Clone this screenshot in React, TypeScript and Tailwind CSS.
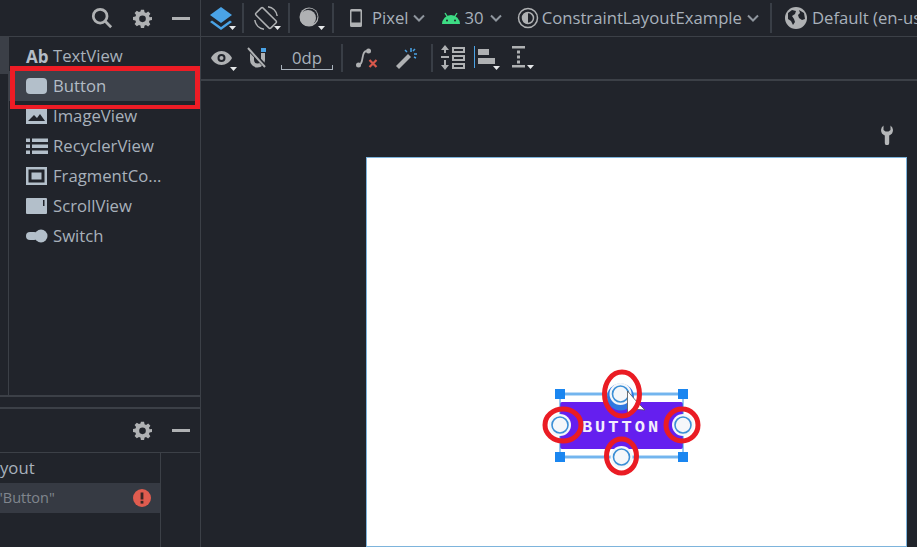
const font = "font-['Open_Sans','Noto_Sans',sans-serif]";

function Caret({ className = "" }: { className?: string }) {
  return (
    <svg width="7" height="4" viewBox="0 0 7 4" className={className}>
      <path d="M0 0h7L3.5 4z" fill="#e6e8ea" />
    </svg>
  );
}

function Chevron() {
  return (
    <svg width="12" height="8" viewBox="0 0 12 8" fill="none" stroke="#8f969e" strokeWidth="2" className="shrink-0">
      <path d="M1 1.5l5 5 5-5" />
    </svg>
  );
}

function Gear() {
  return (
    <svg width="19" height="19" viewBox="0 0 24 24" fill="#afb1b3">
      <path
        fillRule="evenodd"
        d="M10 1h4l.6 3.1 1.9.8 2.7-1.8 2.8 2.8-1.8 2.7.8 1.9L24 10v4l-3.1.6-.8 1.9 1.8 2.7-2.8 2.8-2.7-1.8-1.9.8L14 24h-4l-.6-3.1-1.9-.8-2.7 1.800L2 19.100l1.800-2.700-.8-1.900L0 14v-4l3.100-.6.8-1.900L2 4.900l2.800-2.800 2.700 1.800 1.900-.8zM12 8.200a4.200 4.200 0 100 8.400 4.200 4.200 0 000-8.400z"
      />
    </svg>
  );
}

function Minus() {
  return <div className="h-[3px] w-[18px] bg-[#afb1b3]" />;
}

function Sep({ h = "h-[30px]" }: { h?: string }) {
  return <div className={`w-[2px] shrink-0 ${h} bg-[#393e46]`} />;
}

const paletteIcons: Record<string, React.ReactNode> = {
  TextView: (
    <span className="text-[17px] font-bold leading-none text-[#b3bcc6]">Ab</span>
  ),
  Button: (
    <svg width="22" height="16" viewBox="0 0 22 16">
      <rect width="21" height="16" rx="4" fill="#b3bfca" />
    </svg>
  ),
  ImageView: (
    <svg width="22" height="16" viewBox="0 0 22 16">
      <path fillRule="evenodd" d="M0 0h21v16H0zM2 13h17l-5-7-3 4-3-3z" fill="#b3bfca" />
    </svg>
  ),
  RecyclerView: (
    <svg width="22" height="16" viewBox="0 0 22 16" fill="#b3bfca">
      <rect y="0.5" width="4" height="3.5" />
      <rect x="6" y="0.5" width="16" height="3.5" />
      <rect y="6.5" width="4" height="3.5" />
      <rect x="6" y="6.5" width="16" height="3.5" />
      <rect y="12.5" width="4" height="3.5" />
      <rect x="6" y="12.5" width="16" height="3.5" />
    </svg>
  ),
  "FragmentCo...": (
    <svg width="22" height="18" viewBox="0 0 22 18">
      <path fillRule="evenodd" d="M0 0h21v18H0zM2.500 2.500v13h16v-13zM5.500 5.500h10v7h-10z" fill="#b3bfca" />
    </svg>
  ),
  ScrollView: (
    <svg width="22" height="16" viewBox="0 0 22 16">
      <path fillRule="evenodd" d="M1 0h19a1 1 0 011 1v14a1 1 0 01-1 1H1a1 1 0 01-1-1V1a1 1 0 011-1zM17 2v6h1.500V2z" fill="#b3bfca" />
    </svg>
  ),
  Switch: (
    <svg width="22" height="14" viewBox="0 0 22 14" fill="#b3bfca">
      <rect y="3" width="12" height="8" rx="4" />
      <circle cx="15" cy="7" r="6.500" />
    </svg>
  ),
};

const paletteItems = ["TextView", "Button", "ImageView", "RecyclerView", "FragmentCo...", "ScrollView", "Switch"];

function Palette() {
  return (
    <div className="relative flex-1 flex min-h-0">
      <div className="w-[9px] flex flex-col border-r border-[#3c4047]">
        <div className="h-[37px] bg-[#3b3f47]" />
      </div>
      <div className="flex-1 pt-[4px]">
        {paletteItems.map((name) => (
          <div
            key={name}
            className={`flex items-center h-[30px] pl-[17px] ${
              name === "Button" ? "bg-[#3d424b] text-[#b3bcc6]" : "text-[#a8b1bb]"
            }`}
          >
            <span className="w-[27px] flex items-center">{paletteIcons[name]}</span>
            <span className="text-[16.7px] leading-none pt-[1px]">{name}</span>
          </div>
        ))}
      </div>
      {/* red annotation around the Button row */}
      <div className="absolute left-[10px] top-[29px] w-[190px] h-[43px] border-[5px] border-b-[4px] border-[#ee1c25]" />
    </div>
  );
}

function BottomPanel() {
  return (
    <div className="h-[140px] flex flex-col shrink-0 border-t-[2px] border-[#3c4047]">
      <div className="h-[44px] flex items-center justify-end gap-[20px] pr-[10px] border-b border-[#3c4047]">
        <Gear />
        <Minus />
      </div>
      <div className="flex-1 flex">
        <div className="w-[161px] border-r border-[#3c4047]">
          <div className="h-[30px] flex items-center text-[16.7px] text-[#a8b1bb]">
            <span className="leading-none">yout</span>
          </div>
          <div className="h-[30px] flex items-center justify-between bg-[#363a43] pr-[9px]">
            <span className="text-[14.5px] leading-none text-[#80868e] -ml-[3px]">"Button"</span>
            <svg width="18" height="18" viewBox="0 0 18 18">
              <circle cx="9" cy="9" r="9" fill="#e05c4f" />
              <rect x="7.600" y="3.500" width="2.800" height="7" fill="#3a2624" />
              <rect x="7.600" y="11.800" width="2.800" height="2.800" fill="#3a2624" />
            </svg>
          </div>
        </div>
      </div>
    </div>
  );
}

function TopBar() {
  return (
    <div className="h-[37px] flex items-center border-b border-[#3c4047] pl-[8px] text-[16.7px] text-[#a8b1bb] whitespace-nowrap overflow-hidden">
      {/* layers */}
      <div className="relative w-[24px] h-[24px] mr-[9px] shrink-0">
        <svg width="24" height="24" viewBox="0 0 24 24">
          <path d="M12 1l11 8-11 8L1 9z" fill="#4aa3e6" />
          <path d="M3 14.500l9 6.500 9-6.500 2 1.500-11 8-11-8z" fill="#4aa3e6" />
        </svg>
        <Caret className="absolute -right-[3px] bottom-0" />
      </div>
      <Sep />
      {/* orientation */}
      <div className="relative w-[24px] h-[24px] mx-[10px] shrink-0">
        <svg width="24" height="24" viewBox="0 0 24 24" fill="none" stroke="#afb1b3" strokeWidth="1.500">
          <rect x="7" y="1.500" width="10" height="21" rx="1.500" transform="rotate(-45 12 12)" />
          <path d="M14 .8A11 11 0 0123.200 10M10 23.200A11 11 0 01.8 14" />
        </svg>
        <Caret className="absolute -right-[3px] bottom-0" />
      </div>
      <Sep />
      {/* night mode */}
      <div className="relative w-[24px] h-[24px] mx-[9px] shrink-0">
        <svg width="20" height="20" viewBox="0 0 20 20" className="mt-[1px]">
          <circle cx="10" cy="10" r="9.500" fill="#afb1b3" />
          <circle cx="10.500" cy="9.500" r="8" fill="#21242b" />
          <circle cx="9" cy="11" r="8" fill="#afb1b3" />
        </svg>
        <Caret className="absolute -right-[2px] bottom-0" />
      </div>
      <Sep />
      <svg width="12" height="18" viewBox="0 0 12 18" className="ml-[16px] mr-[10px] shrink-0">
        <path fillRule="evenodd" d="M1.500 0h9A1.500 1.500 0 0112 1.500v15a1.500 1.500 0 01-1.500 1.500h-9A1.500 1.500 0 010 16.500v-15A1.500 1.500 0 011.500 0zM1.500 2.500v11h9v-11z" fill="#afb1b3" />
      </svg>
      <span className="mr-[4px]">Pixel</span>
      <Chevron />
      <svg width="20" height="12" viewBox="0 0 20 12" className="ml-[16px] mr-[4px] shrink-0">
        <path d="M1 12a9 9 0 0118 0z" fill="#3ddc84" />
        <path d="M4 1l2.500 4M16 1l-2.500 4" stroke="#3ddc84" strokeWidth="1.400" />
        <circle cx="6" cy="8.500" r="1" fill="#21242b" />
        <circle cx="14" cy="8.500" r="1" fill="#21242b" />
      </svg>
      <span className="mr-[6px]">30</span>
      <Chevron />
      <svg width="22" height="22" viewBox="0 0 22 22" className="ml-[15px] mr-[3px] shrink-0">
        <circle cx="11" cy="11" r="9.500" fill="none" stroke="#afb1b3" strokeWidth="1.500" />
        <circle cx="11" cy="11" r="5.500" fill="none" stroke="#afb1b3" strokeWidth="1.500" />
        <path d="M11 5.500a5.500 5.500 0 000 11z" fill="#afb1b3" />
      </svg>
      <span className="mr-[5px]">ConstraintLayoutExample</span>
      <Chevron />
      <div className="ml-[11px]">
        <Sep />
      </div>
      <svg width="22" height="22" viewBox="0 0 22 22" className="ml-[13px] mr-[5px] shrink-0">
        <circle cx="11" cy="11" r="11" fill="#afb1b3" />
        <path d="M3 6l4-3 4 1-1 3-3 2 2 3 1 3-2 3-2-4-3-2zM14 3l5 3 1 6-3 1-3-2-1-3 2-2z" fill="#21242b" />
      </svg>
      <span>Default (en-us)</span>
    </div>
  );
}

function SecondBar() {
  return (
    <div className="h-[44px] flex items-center border-b-[2px] border-[#3c4047] pl-[10px] shrink-0">
      {/* eye */}
      <div className="relative w-[21px] h-[24px] mr-[14px] flex items-center">
        <svg width="21" height="14" viewBox="0 0 21 14">
          <path fillRule="evenodd" d="M0 7c2-4 6-7 10.500-7S19 3 21 7c-2 4-6 7-10.500 7S2 11 0 7zM10.500 3a4 4 0 100 8 4 4 0 000-8z" fill="#afb1b3" />
          <circle cx="10.500" cy="7" r="2" fill="#afb1b3" />
        </svg>
        <Caret className="absolute -right-[5px] bottom-[-1px]" />
      </div>
      {/* magnet off */}
      <svg width="22" height="24" viewBox="0 0 22 24" className="mr-[13px]">
        <rect x="15" y="2" width="5" height="4" fill="#4aa3e6" />
        <path d="M4 7v7a7.500 7.500 0 0015 0V7h-4v7a3.500 3.500 0 01-7 0V7z" fill="#afb1b3" />
        <path d="M1 1l18 19" stroke="#21242b" strokeWidth="4" />
        <path d="M2 2l17 19" stroke="#afb1b3" strokeWidth="2" />
      </svg>
      {/* default margin */}
      <div className="relative w-[52px] h-[24px] flex justify-center text-[16.7px] leading-[24px] text-[#a8b1bb] border-b border-[#a8b1bb]">
        0dp
        <div className="absolute left-0 bottom-0 w-px h-[4px] bg-[#a8b1bb]" />
        <div className="absolute right-0 bottom-0 w-px h-[4px] bg-[#a8b1bb]" />
      </div>
      <div className="ml-[8px] mr-[12px]">
        <Sep h="h-[28px]" />
      </div>
      {/* clear constraints */}
      <svg width="25" height="22" viewBox="0 0 24 22" className="mr-[14px]">
        <path d="M3 18c6 0 2-14 8-14" fill="none" stroke="#afb1b3" strokeWidth="1.800" />
        <circle cx="3" cy="18" r="2.500" fill="#afb1b3" />
        <circle cx="13" cy="4" r="2.500" fill="#afb1b3" />
        <path d="M14 13l7 7M21 13l-7 7" stroke="#d9584b" strokeWidth="2.200" />
      </svg>
      {/* magic wand */}
      <svg width="24" height="24" viewBox="0 0 24 24" className="mr-[13px]">
        <path d="M2 20L14 8l3 3L5 23z" fill="#afb1b3" />
        <path d="M17 2v4M23 8h-3M21 3l-2 2M11 4l2 2M22 12l-2-1" stroke="#4aa3e6" strokeWidth="1.500" />
      </svg>
      <Sep h="h-[28px]" />
      {/* pack */}
      <svg width="24" height="26" viewBox="0 0 24 26" className="ml-[8px] mr-[4px]">
        <path d="M4 0l4 5H5v3H3V5H0zM3 15h2v5h3l-4 5-4-5h3zM0 11h8v2H0z" fill="#afb1b3" />
        <path fillRule="evenodd" d="M11 2h13v6H11zM11 10h13v6H11zM11 18h13v6H11zM13 12v2h9v-2zM13 20v2h9v-2zM13 4v2h9V4z" fill="#afb1b3" />
      </svg>
      <div className="relative w-[22px] h-[24px] ml-[5px] mr-[11px] flex">
        <div className="w-px h-[22px] bg-[#4aa3e6]" />
        <div className="ml-[3px] mt-[3px] flex flex-col gap-[3px]">
          <div className="w-[11px] h-[6px] bg-[#afb1b3]" />
          <div className="w-[17px] h-[6px] bg-[#afb1b3]" />
        </div>
        <Caret className="absolute -right-[4px] bottom-0" />
      </div>
      {/* distribute */}
      <div className="relative w-[14px] h-[24px] ml-[5px]">
        <svg width="14" height="22" viewBox="0 0 14 22" fill="#afb1b3">
          <rect width="13" height="2.500" />
          <rect y="19" width="13" height="2.500" />
          <rect x="5" y="4.500" width="3" height="3" />
          <rect x="5" y="9.500" width="3" height="3" />
          <rect x="5" y="14.500" width="3" height="3" />
        </svg>
        <Caret className="absolute -right-[8px] bottom-[1px]" />
      </div>
    </div>
  );
}

function SelectedButton() {
  return (
    <div className="absolute left-[173px] top-[202px] w-[170px] h-[125px]">
      <div className="absolute left-[20px] top-[42px] w-[123px] h-[47px] pt-[3px] rounded-[2px] bg-[#651fef] flex items-center justify-center text-[#f3eefc] text-[17px] tracking-[3px] font-['Liberation_Mono',monospace] font-bold leading-none">
        BUTTON
      </div>
      <svg width="170" height="125" viewBox="540 360 170 125" className="absolute inset-0">
        <path d="M560 394H683M560 457H683" stroke="#bcdcf7" strokeWidth="4" />
        <path d="M560 394H683M560 457H683M560 394V457M683 394V457" stroke="#2b8ee6" strokeWidth="1" />
        {[
          [560, 394],
          [683, 394],
          [560, 457],
          [683, 457],
        ].map(([x, y]) => (
          <rect key={`${x}-${y}`} x={x - 5} y={y - 5} width="10" height="10" fill="#1a86f0" />
        ))}
        <circle cx="620.500" cy="397" r="13.500" fill="#2f78e0" />
        {[
          [620.500, 394],
          [560, 425],
          [683, 425],
          [621.500, 457],
        ].map(([x, y]) => (
          <g key={`${x}-${y}`}>
            <circle cx={x} cy={y} r="11" fill="#f5f7fa" />
            <circle cx={x} cy={y} r="8" fill="#f5f7fa" stroke="#3c8fd6" strokeWidth="1.600" />
          </g>
        ))}
        <path d="M627.500 391V416L633 409 645 410 637 402z" fill="#fff" stroke="#555" strokeWidth="0.800" />
        <g fill="none" stroke="#ea1c24" strokeWidth="5">
          <ellipse cx="622" cy="394" rx="17.500" ry="22" />
          <ellipse cx="563" cy="425" rx="18" ry="16" />
          <ellipse cx="682" cy="425" rx="16" ry="16" />
          <ellipse cx="621.500" cy="456" rx="15" ry="17" />
        </g>
      </svg>
    </div>
  );
}

export default function App() {
  return (
    <div className={`w-[917px] h-[547px] flex overflow-hidden bg-[#21242b] ${font}`}>
      <div className="w-[201px] shrink-0 flex flex-col border-r border-[#3c4047]">
        <div className="h-[37px] shrink-0 flex items-center justify-end gap-[20px] pr-[10px] border-b border-[#3c4047]">
          <svg width="22" height="22" viewBox="0 0 24 24" fill="none" stroke="#afb1b3" strokeWidth="3">
            <circle cx="10" cy="10" r="7.500" />
            <path d="M15.500 15.500L22 22" />
          </svg>
          <Gear />
          <Minus />
        </div>
        <Palette />
        <div className="h-[12px] shrink-0 border-t-[2px] border-[#3c4047]" />
        <BottomPanel />
      </div>
      <div className="flex-1 min-w-0 flex flex-col">
        <TopBar />
        <SecondBar />
        <div className="flex-1 min-h-0 flex flex-col">
          <div className="flex justify-end pr-[24px] pt-[44px] h-[76px]">
            <svg width="12" height="20" viewBox="0 0 12 20" className="shrink-0">
              <path d="M2.500 .5v4.500L4.500 6.500h3L9.500 5V.5A6 6 0 0112 5a6 6 0 01-3.800 5.500V18a2.200 2.200 0 01-4.400 0V10.500A6 6 0 010 5 6 6 0 012.500 .5z" fill="#b5b7b9" />
            </svg>
          </div>
          <div className="relative ml-[165px] mr-[10px] flex-1 bg-white border border-[#7db4dc]">
            <SelectedButton />
          </div>
        </div>
      </div>
    </div>
  );
}
